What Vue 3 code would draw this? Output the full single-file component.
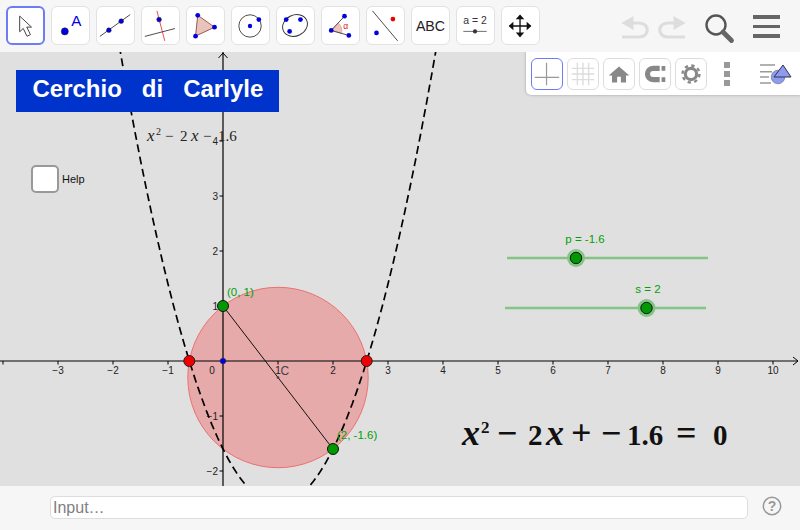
<script setup>
// graph coordinates: origin on the page and px per unit
const ox = 223;
const oy = 361;
const unit = 55;

const px = (x) => ox + x * unit;
const py = (y) => oy - y * unit;

const f = (x) => x * x - 2 * x - 1.6;

function parabola() {
  let d = "";
  for (let x = -2; x <= 4; x += 0.05) {
    d += (d ? " L" : "M") + px(x).toFixed(1) + " " + py(f(x)).toFixed(1);
  }
  return d;
}

const xTicks = [-4, -3, -2, -1, 1, 2, 3, 4, 5, 6, 7, 8, 9, 10];
const xLabels = [-3, -2, -1, 1, 2, 3, 4, 5, 6, 7, 8, 9, 10];
const yTicks = [4, 3, 2, 1, -1, -2];

const label = (n) => (n < 0 ? "\u2212" + -n : String(n));

const sliders = [
  { name: "p = -1.6", x1: 507, x2: 708, y: 258, hx: 576, lx: 585 },
  { name: "s = 2", x1: 505, x2: 706, y: 308, hx: 646.5, lx: 648 },
];
</script>

<template>
  <div class="app">
    <header class="toolbar">
      <div class="tools">
        <button class="tool active">
          <svg viewBox="0 0 39 39"><path d="M13 9v17.500l4-3.700 4.200 8.700 3.800-1.900-4.100-8.300h5.300z" fill="#fff" stroke="#444" stroke-width="1.100" /></svg>
        </button>
        <button class="tool">
          <svg viewBox="0 0 39 39">
            <circle cx="13.500" cy="25.700" r="3.700" fill="#0000e0" stroke="#223" stroke-width=".6" />
            <text x="25.500" y="20" text-anchor="middle" class="icon-a">A</text>
          </svg>
        </button>
        <button class="tool">
          <svg viewBox="0 0 39 39">
            <line x1="3" y1="31" x2="35" y2="8" stroke="#444" />
            <circle cx="12.500" cy="24.500" r="2.500" fill="#0000e0" stroke="#223" stroke-width=".5" />
            <circle cx="25.500" cy="15" r="2.500" fill="#0000e0" stroke="#223" stroke-width=".5" />
          </svg>
        </button>
        <button class="tool">
          <svg viewBox="0 0 39 39">
            <line x1="15.700" y1="4" x2="24" y2="35.700" stroke="#ee4444" />
            <line x1="3" y1="31" x2="34.700" y2="22.700" stroke="#444" />
            <circle cx="18" cy="13.300" r="2.500" fill="#0000e0" stroke="#223" stroke-width=".5" />
          </svg>
        </button>
        <button class="tool">
          <svg viewBox="0 0 39 39">
            <path d="M11.300 8.700L29 21.300 9 30.700z" fill="#e8c4bc" stroke="#99504a" />
            <circle cx="11.300" cy="8.700" r="2.500" fill="#0000e0" />
            <circle cx="29" cy="21.300" r="2.500" fill="#0000e0" />
            <circle cx="9" cy="30.700" r="2.500" fill="#0000e0" />
          </svg>
        </button>
        <button class="tool">
          <svg viewBox="0 0 39 39">
            <circle cx="19" cy="20" r="11.800" fill="none" stroke="#444" />
            <circle cx="19" cy="20" r="2.300" fill="#0000e0" />
            <circle cx="28.300" cy="13.300" r="2.500" fill="#0000e0" />
          </svg>
        </button>
        <button class="tool">
          <svg viewBox="0 0 39 39">
            <ellipse cx="19" cy="19.500" rx="13.500" ry="11" transform="rotate(-25 19 19.500)" fill="none" stroke="#333" />
            <circle cx="9.700" cy="13.300" r="2.500" fill="#0000e0" />
            <circle cx="24.700" cy="13.300" r="2.500" fill="#0000e0" />
            <circle cx="13.300" cy="25.700" r="2.500" fill="#0000e0" />
          </svg>
        </button>
        <button class="tool">
          <svg viewBox="0 0 39 39">
            <path d="M9.700 24.700L17 16.800A11 11 0 0 1 20.500 27.600z" fill="#eec4bc" stroke="#cc8880" stroke-width=".6" />
            <path d="M23.700 9.700L9.700 24.700 28.300 30" fill="none" stroke="#444" />
            <circle cx="9.700" cy="24.700" r="2.500" fill="#0000e0" />
            <circle cx="23.700" cy="9.700" r="2.500" fill="#0000e0" />
            <circle cx="28.300" cy="30" r="2.500" fill="#0000e0" />
            <text x="25" y="23" text-anchor="middle" class="icon-alpha">α</text>
          </svg>
        </button>
        <button class="tool">
          <svg viewBox="0 0 39 39">
            <line x1="5.700" y1="4" x2="32.300" y2="35.700" stroke="#444" />
            <circle cx="27.300" cy="12.700" r="2.500" fill="#ee0000" />
            <circle cx="10" cy="27.300" r="2.500" fill="#0000e0" />
          </svg>
        </button>
        <button class="tool">
          <svg viewBox="0 0 39 39"><text x="19.500" y="25.500" text-anchor="middle" class="icon-abc">ABC</text></svg>
        </button>
        <button class="tool">
          <svg viewBox="0 0 39 39">
            <text x="19" y="18" text-anchor="middle" class="icon-slider">a = 2</text>
            <line x1="6.700" y1="25.700" x2="31.300" y2="25.700" stroke="#666" />
            <circle cx="19" cy="25.700" r="2.200" fill="#333" />
          </svg>
        </button>
        <button class="tool">
          <svg viewBox="0 0 39 39">
            <path d="M19 9v22M8 20h22" stroke="#111" stroke-width="1.400" />
            <path d="M19 8l-4.500 5h9zM19 32l-4.500-5h9zM7 20l5-4.500v9zM31 20l-5-4.500v9z" fill="#111" />
          </svg>
        </button>
      </div>

      <div class="actions">
        <svg class="undo" width="68" height="30" viewBox="0 0 68 30">
          <path d="M1.500 8l12-7v14z" fill="#ddd" />
          <path d="M13 8h6c11 0 11 14 0 14H2" fill="none" stroke="#ddd" stroke-width="3.200" />
          <path d="M65.500 8l-12-7v14z" fill="#ddd" />
          <path d="M54 8h-6c-11 0-11 14 0 14h17" fill="none" stroke="#ddd" stroke-width="3.200" />
        </svg>
        <svg class="search" width="32" height="32" viewBox="0 0 32 32">
          <circle cx="12" cy="12" r="9.500" fill="none" stroke="#555" stroke-width="2.400" />
          <path d="M19 19l8.500 8.500" stroke="#666" stroke-width="4.800" stroke-linecap="round" />
        </svg>
        <div class="menu"><span></span><span></span><span></span></div>
      </div>
    </header>

    <main class="graph">
      <svg class="canvas" viewBox="0 52 800 434">
        <circle :cx="px(1)" :cy="py(-0.3)" r="90.200" fill="#f06060" fill-opacity=".42" stroke="#ec7070" />

        <line x1="0" :y1="oy" x2="798" :y2="oy" stroke="#000" stroke-width="1.200" />
        <line :x1="ox" y1="52" :x2="ox" y2="486" stroke="#000" stroke-width="1.200" />
        <path d="M793 357l5 4-5 4M218.500 58l4.500-5 4.500 5" fill="none" stroke="#000" />

        <line v-for="t in xTicks" :key="'x' + t" :x1="px(t)" :y1="oy" :x2="px(t)" :y2="oy + 3.500" stroke="#000" />
        <line v-for="t in yTicks" :key="'y' + t" :x1="ox - 3.500" :y1="py(t)" :x2="ox" :y2="py(t)" stroke="#000" />

        <text v-for="t in xLabels" :key="'xl' + t" :x="px(t)" :y="oy + 13" text-anchor="middle" class="tick">{{ label(t) }}</text>
        <text :x="ox - 11" :y="oy + 13" text-anchor="middle" class="tick">0</text>
        <text v-for="t in yTicks" :key="'yl' + t" :x="ox - 5" :y="py(t) + 4" text-anchor="end" class="tick">{{ label(t) }}</text>

        <path :d="parabola()" fill="none" stroke="#000" stroke-width="1.700" stroke-dasharray="8 4.500" />

        <line :x1="px(0)" :y1="py(1)" :x2="px(2)" :y2="py(-1.6)" stroke="#111" />
        <circle :cx="px(1)" :cy="py(-0.3)" r="1.300" fill="#444" />
        <text x="280.500" y="375" class="c-label">C</text>

        <circle cx="189.300" :cy="oy" r="5.500" fill="#f00000" stroke="#222" />
        <circle cx="366.700" :cy="oy" r="5.500" fill="#f00000" stroke="#222" />
        <circle :cx="ox" :cy="oy" r="2.800" fill="#0000f0" stroke="#224" stroke-width=".6" />
        <circle :cx="px(0)" :cy="py(1)" r="5.500" fill="#009900" stroke="#111" />
        <circle :cx="px(2)" :cy="py(-1.6)" r="5.500" fill="#009900" stroke="#111" />
        <text x="227" y="296" class="green">(0, 1)</text>
        <text x="337" y="439" class="green">(2, -1.6)</text>

        <g v-for="s in sliders" :key="s.name">
          <line :x1="s.x1" :y1="s.y" :x2="s.x2" :y2="s.y" stroke="#84c484" stroke-width="2.500" />
          <circle :cx="s.hx" :cy="s.y" r="9" fill="#84c484" />
          <circle :cx="s.hx" :cy="s.y" r="5.700" fill="#009900" stroke="#112" />
          <text :x="s.lx" :y="s.y - 15" text-anchor="middle" class="green">{{ s.name }}</text>
        </g>

        <text y="141" class="math">
          <tspan x="147" font-style="italic" font-size="17">x</tspan>
          <tspan x="156" y="135" font-size="10">2</tspan>
          <tspan x="165" y="141">−</tspan>
          <tspan x="180">2</tspan>
          <tspan x="191" font-style="italic" font-size="17">x</tspan>
          <tspan x="203">−</tspan>
          <tspan x="218">1.6</tspan>
        </text>

        <text y="445" class="math-big">
          <tspan x="462" font-style="italic" font-size="36">x</tspan>
          <tspan x="481" y="433" font-size="17">2</tspan>
          <tspan x="497" y="445" class="op">−</tspan>
          <tspan x="528">2</tspan>
          <tspan x="546" font-style="italic" font-size="36">x</tspan>
          <tspan x="571" class="op">+</tspan>
          <tspan x="601" class="op">−</tspan>
          <tspan x="627">1.6</tspan>
          <tspan x="676" class="op">=</tspan>
          <tspan x="713">0</tspan>
        </text>
      </svg>

      <div class="title">Cerchio<span class="sp"></span>di<span class="sp"></span>Carlyle</div>

      <label class="help">
        <span class="box"></span>
        <span>Help</span>
      </label>

      <div class="stylebar">
        <button class="sbtn selected">
          <svg viewBox="0 0 32 32"><path d="M15.500 4v24M3 19.500h26" stroke="#999" stroke-width="1.300" fill="none" /></svg>
        </button>
        <button class="sbtn">
          <svg viewBox="0 0 32 32"><path d="M10 4v24M16 4v24M22 4v24M4 10h24M4 16h24M4 22h24" stroke="#ddd" stroke-width="1.500" fill="none" /></svg>
        </button>
        <button class="sbtn">
          <svg viewBox="0 0 32 32"><path d="M16 8L5 17.500h3.500V25h5.500v-6h4v6h5.500v-7.500H27z" fill="#888" /></svg>
        </button>
        <button class="sbtn">
          <svg viewBox="0 0 32 32"><path d="M21 10h-7c-8 0-8 12 0 12h7" fill="none" stroke="#888" stroke-width="5.500" /><path d="M23 7.500h4v5h-4zM23 19.500h4v5h-4z" fill="#888" /></svg>
        </button>
        <button class="sbtn">
          <svg viewBox="0 0 32 32">
            <circle cx="16" cy="16" r="6" fill="none" stroke="#888" stroke-width="3.400" />
            <circle cx="16" cy="16" r="9" fill="none" stroke="#888" stroke-width="2.600" stroke-dasharray="3.500 3.570" />
          </svg>
        </button>
        <div class="kebab"><span></span><span></span><span></span></div>
        <svg class="layers" width="32" height="26" viewBox="0 0 32 26">
          <path d="M0 3h15M0 9.700h12M0 15h9M0 21h11" stroke="#999" stroke-width="1.500" />
          <circle cx="18" cy="15" r="6.800" fill="#8d9cf0" stroke="#667" stroke-width=".6" />
          <path d="M23 3l8 12h-17z" fill="#8d9cf0" stroke="#334" />
        </svg>
      </div>
    </main>

    <footer class="inputbar">
      <input class="field" type="text" placeholder="Input…" />
      <svg class="qmark" width="20" height="20" viewBox="0 0 20 20">
        <circle cx="10" cy="10" r="8.700" fill="none" stroke="#999" stroke-width="1.500" />
        <text x="10" y="15" text-anchor="middle" class="q">?</text>
      </svg>
    </footer>
  </div>
</template>

<style scoped>
.app {
  width: 800px;
  height: 530px;
  display: flex;
  flex-direction: column;
  font-family: "Liberation Sans", Arial, sans-serif;
  overflow: hidden;
}

.toolbar {
  height: 52px;
  flex: none;
  box-sizing: border-box;
  padding: 6px 0 0 5.500px;
  display: flex;
  background: #f6f6f6;
}

.tools {
  display: flex;
  gap: 6px;
  align-items: flex-start;
}

.tool {
  width: 39px;
  height: 39px;
  padding: 0;
  box-sizing: border-box;
  background: #fff;
  border: 1px solid #e2e2e2;
  border-radius: 6px;
}

.tool.active {
  border: 2px solid #6d7cf5;
}

.tool svg {
  display: block;
  width: 100%;
  height: 100%;
}

.icon-a {
  font-size: 16px;
  fill: #0000e0;
}

.icon-alpha {
  font-size: 9px;
  fill: #e02020;
}

.icon-abc {
  font-size: 15px;
  fill: #222;
}

.icon-slider {
  font-size: 11px;
  fill: #333;
}

.actions {
  flex: 1;
  display: flex;
  align-items: flex-start;
}

.undo {
  margin: 9px 0 0 80px;
}

.search {
  margin: 7px 0 0 16px;
}

.menu {
  margin: 9px 0 0 17px;
  width: 27px;
  display: flex;
  flex-direction: column;
  gap: 6px;
}

.menu span {
  height: 3.500px;
  background: #666;
}

.graph {
  position: relative;
  flex: 1;
  background: #e0e0e0;
  overflow: hidden;
}

.canvas {
  display: block;
  width: 800px;
  height: 434px;
}

.tick {
  font-size: 10px;
  fill: #222;
}

.c-label {
  fill: #444;
  font-size: 12px;
}

.green {
  font-size: 11.500px;
  fill: #00a000;
}

.math {
  font-family: "Liberation Serif", serif;
  font-size: 15px;
  fill: #222;
}

.math-big {
  font-family: "Liberation Serif", serif;
  font-size: 29px;
  font-weight: bold;
  fill: #111;
}

.op {
  font-size: 36px;
}

.title {
  position: absolute;
  left: 16px;
  top: 18px;
  width: 263px;
  height: 42px;
  box-sizing: border-box;
  padding-left: 16.500px;
  background: #0033cc;
  color: #fff;
  font-size: 24px;
  font-weight: bold;
  line-height: 38px;
  white-space: nowrap;
}

.sp {
  display: inline-block;
  width: 20px;
}

.help {
  position: absolute;
  left: 31px;
  top: 113px;
  display: flex;
  align-items: center;
  gap: 3px;
  font-size: 11px;
  color: #111;
}

.box {
  width: 28px;
  height: 28px;
  box-sizing: border-box;
  background: #fff;
  border: 2px solid #999;
  border-radius: 5px;
}

.stylebar {
  position: absolute;
  top: 0;
  right: 0;
  width: 274px;
  height: 43px;
  box-sizing: border-box;
  padding: 6px 0 0 5px;
  display: flex;
  align-items: flex-start;
  gap: 4px;
  background: #fff;
  border-bottom-left-radius: 5px;
  box-shadow: 0 0 3px rgba(0, 0, 0, 0.3);
}

.sbtn {
  width: 32px;
  height: 32px;
  padding: 0;
  box-sizing: border-box;
  background: #fff;
  border: 1px solid #ddd;
  border-radius: 6px;
}

.sbtn.selected {
  border-color: #6d7cf5;
}

.sbtn svg {
  display: block;
  width: 100%;
  height: 100%;
}

.kebab {
  margin: 4px 0 0 13px;
  display: flex;
  flex-direction: column;
  gap: 3px;
}

.kebab span {
  width: 6px;
  height: 6px;
  background: #999;
}

.layers {
  margin: 4px 0 0 26px;
}

.inputbar {
  height: 44px;
  flex: none;
  display: flex;
  align-items: flex-start;
  box-sizing: border-box;
  padding: 10px 0 0 50px;
  background: #f6f6f6;
}

.field {
  width: 698px;
  height: 23px;
  box-sizing: border-box;
  padding: 0 2px;
  border: 1px solid #ddd;
  border-radius: 5px;
  background: #fff;
  font-family: "Liberation Sans", Arial, sans-serif;
  font-size: 16px;
  outline: none;
}

.field::placeholder {
  color: #808080;
  opacity: 1;
}

.qmark {
  margin-left: 14px;
}

.q {
  font-size: 14px;
  font-weight: bold;
  fill: #999;
}
</style>

<style>
html,
body {
  margin: 0;
  background: #f6f6f6;
}
</style>
